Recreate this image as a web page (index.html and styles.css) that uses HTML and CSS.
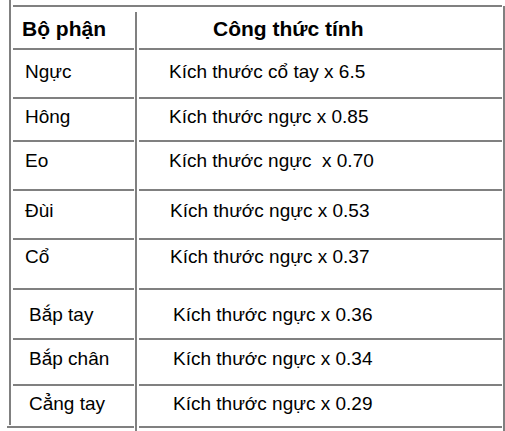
FILE: index.html
```html
<!DOCTYPE html>
<html lang="vi">
<head>
<meta charset="utf-8">
<title>Bảng công thức tính</title>
<link rel="stylesheet" href="styles.css">
</head>
<body>
<div class="page">
  <div class="rail-left"></div>
  <div class="table">
    <div class="divider"></div>

    <div class="cell cell-l head r0 pl-h">Bộ phận</div>
    <div class="cell cell-r head r0 pr-h">Công thức tính</div>

    <div class="cell cell-l r1 pl-a">Ngực</div>
    <div class="cell cell-r r1 pr-a">Kích thước cổ tay x 6.5</div>

    <div class="cell cell-l r2 pl-a">Hông</div>
    <div class="cell cell-r r2 pr-a">Kích thước ngực x 0.85</div>

    <div class="cell cell-l r3 pl-a">Eo</div>
    <div class="cell cell-r r3 pr-a">Kích thước ngực&nbsp; x 0.70</div>

    <div class="cell cell-l r4 pl-a">Đùi</div>
    <div class="cell cell-r r4 pr-b">Kích thước ngực x 0.53</div>

    <div class="cell cell-l r5 pl-a">Cổ</div>
    <div class="cell cell-r r5 pr-b">Kích thước ngực x 0.37</div>

    <div class="cell cell-l r6 pl-b">Bắp tay</div>
    <div class="cell cell-r r6 pr-c">Kích thước ngực x 0.36</div>

    <div class="cell cell-l r7 pl-b">Bắp chân</div>
    <div class="cell cell-r r7 pr-c">Kích thước ngực x 0.34</div>

    <div class="cell cell-l r8 pl-b last-l">Cẳng tay</div>
    <div class="cell cell-r r8 pr-c">Kích thước ngực x 0.29</div>
  </div>
  <div class="rail-right"></div>
</div>
</body>
</html>
```

FILE: styles.css
```css
html, body {
  margin: 0;
  padding: 0;
  background: #ffffff;
}

body {
  font-family: "Liberation Sans", Arial, sans-serif;
  color: #000000;
  overflow: hidden;
}

.page {
  display: flex;
  height: 431px;
  padding-left: 9px;
  box-sizing: border-box;
  overflow: hidden;
}

.rail-left {
  flex: none;
  width: 2px;
  height: 425px;
  background: #808080;
}

.table {
  flex: none;
  width: 489px;
  margin-left: 2px;
  margin-top: 5px;
  border-top: 2px solid #808080;
  display: grid;
  grid-template-columns: 121px 5px 363px;
  grid-template-rows: 43px 49px 43px 49px 49px 50px 50px 46px 42px 1fr;
}

.divider {
  grid-column: 2;
  grid-row: 1 / -1;
  width: 2px;
  margin: 5px 0 0 1px;
  background: #808080;
}

.rail-right {
  flex: none;
  width: 2px;
  margin-left: 1px;
  margin-top: 6px;
  background: #808080;
}

.cell {
  box-sizing: border-box;
  border-bottom: 2px solid #808080;
  font-size: 19px;
  line-height: 22px;
  white-space: nowrap;
}

.cell-l { grid-column: 1; }
.cell-r { grid-column: 3; }

.head {
  font-size: 21px;
  line-height: 24px;
  font-weight: bold;
}

.r0 { padding-top: 10px; }
.r1 { padding-top: 11px; }
.r2 { padding-top: 7px; }
.r3 { padding-top: 8px; }
.r4 { padding-top: 9px; }
.r5 { padding-top: 6px; }
.r6 { padding-top: 14px; }
.r7 { padding-top: 8px; }
.r8 { padding-top: 7px; }

.pl-h { padding-left: 9px; }
.pl-a { padding-left: 12px; }
.pl-b { padding-left: 16px; }

.pr-h { padding-left: 74px; }
.pr-a { padding-left: 30px; }
.pr-b { padding-left: 31px; }
.pr-c { padding-left: 34px; }

.last-l {
  margin-left: -6px;
  padding-left: 22px;
}
```
